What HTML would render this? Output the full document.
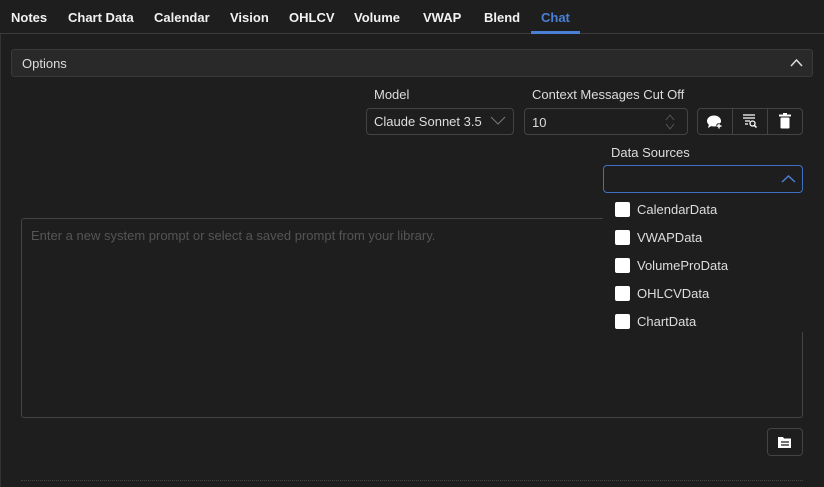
<!DOCTYPE html>
<html><head><style>
*{box-sizing:border-box;margin:0;padding:0}
body{width:824px;height:487px;background:#1e1e1e;font-family:"Liberation Sans",sans-serif;color:#ddd;position:relative;overflow:hidden;font-size:13px}
.abs{position:absolute}
.tabs{left:0;top:0;width:824px;height:34px;border-bottom:1px solid #3a3a3a;background:#1e1e1e}
.tab{position:absolute;top:10px;font-weight:bold;font-size:13px;color:#f2f2f2}
.box{border:1px solid #444;border-radius:4px}
.cb{position:absolute;left:615px;width:15px;height:15px;background:#fff;border-radius:2px}
.cl{position:absolute;left:637px;font-size:13px;color:#ddd}
</style></head><body>
<div class="abs" style="left:0;top:0;width:1px;height:487px;background:#333"></div>
<div class="abs tabs">
<span class="tab" style="left:11px">Notes</span>
<span class="tab" style="left:68px">Chart Data</span>
<span class="tab" style="left:154px">Calendar</span>
<span class="tab" style="left:230px">Vision</span>
<span class="tab" style="left:289px">OHLCV</span>
<span class="tab" style="left:354px">Volume</span>
<span class="tab" style="left:423px">VWAP</span>
<span class="tab" style="left:484px">Blend</span>
<span class="tab" style="left:541px;color:#4a7fd6">Chat</span>
<div class="abs" style="left:531px;top:31px;width:49px;height:3px;background:#4a7fd6"></div>
</div>
<div class="abs" style="left:11px;top:49px;width:802px;height:28px;background:#292929;border:1px solid #3a3a3a;border-radius:3px"></div>
<div class="abs" style="left:22px;top:56px;font-size:13px;color:#ddd">Options</div>
<svg class="abs" style="left:790px;top:58px" width="13" height="10"><path d="M1 8 L6.5 2 L12 8" stroke="#ddd" stroke-width="1.5" fill="none"/></svg>

<div class="abs" style="left:374px;top:87px">Model</div>
<div class="abs box" style="left:366px;top:108px;width:148px;height:27px"></div>
<div class="abs" style="left:374px;top:114px">Claude Sonnet 3.5</div>
<svg class="abs" style="left:490px;top:116px" width="16" height="10"><path d="M1 1 L8 8 L15 1" stroke="#777" fill="none"/></svg>

<div class="abs" style="left:532px;top:87px">Context Messages Cut Off</div>
<div class="abs box" style="left:524px;top:108px;width:164px;height:27px"></div>
<div class="abs" style="left:532px;top:115px">10</div>
<svg class="abs" style="left:664px;top:112px" width="12" height="20"><path d="M2 8 L6 3 L10 8 M2 12 L6 17 L10 12" stroke="#555" fill="none"/></svg>

<div class="abs box" style="left:697px;top:108px;width:106px;height:27px"></div>
<div class="abs" style="left:732px;top:108px;width:1px;height:27px;background:#444"></div>
<div class="abs" style="left:767px;top:108px;width:1px;height:27px;background:#444"></div>
<svg class="abs" style="left:706px;top:114px" width="18" height="16"><ellipse cx="8" cy="7" rx="7" ry="5.5" fill="#fff"/><path d="M3 10 L2 14 L7 11Z" fill="#fff"/><path d="M13 9 v6 M10 12 h6" stroke="#1e1e1e" stroke-width="3"/><path d="M13 9.5 v5 M10.5 12 h5" stroke="#fff" stroke-width="1.4"/></svg>
<svg class="abs" style="left:742px;top:113px" width="16" height="16"><path d="M1 2h12M1 5h12M3 8h5M3 11h3" stroke="#fff" stroke-width="1.3"/><circle cx="10.5" cy="10.5" r="2.5" stroke="#fff" stroke-width="1.3" fill="none"/><path d="M12.3 12.3 L14.5 14.5" stroke="#fff" stroke-width="1.5"/></svg>
<svg class="abs" style="left:779px;top:113px" width="12" height="16"><rect x="0" y="1.5" width="12" height="2" fill="#fff"/><rect x="4" y="0" width="4" height="2" fill="#fff"/><rect x="1.5" y="4.5" width="9" height="11" rx="1" fill="#fff"/></svg>

<div class="abs" style="left:611px;top:145px">Data Sources</div>
<div class="abs" style="left:603px;top:165px;width:200px;height:28px;border:1px solid #3f6fc0;border-radius:4px"></div>
<svg class="abs" style="left:781px;top:174px" width="15" height="10"><path d="M1 8 L7.5 2 L14 8" stroke="#4a7fd6" stroke-width="1.5" fill="none"/></svg>

<div class="abs" style="left:21px;top:218px;width:782px;height:200px;border:1px solid #444;border-radius:3px"></div>
<div class="abs" style="left:31px;top:228px;color:#555;font-size:13px">Enter a new system prompt or select a saved prompt from your library.</div>

<div class="abs" style="left:603px;top:196px;width:200px;height:136px;background:#1e1e1e"></div>
<div class="cb" style="top:202px"></div><div class="cl" style="top:202px">CalendarData</div>
<div class="cb" style="top:230px"></div><div class="cl" style="top:230px">VWAPData</div>
<div class="cb" style="top:258px"></div><div class="cl" style="top:258px">VolumeProData</div>
<div class="cb" style="top:286px"></div><div class="cl" style="top:286px">OHLCVData</div>
<div class="cb" style="top:314px"></div><div class="cl" style="top:314px">ChartData</div>

<div class="abs box" style="left:767px;top:428px;width:36px;height:28px"></div>
<svg class="abs" style="left:778px;top:435px" width="14" height="14"><path d="M0 2h5l1 1.5h7v9.5H0z" fill="#fff"/><path d="M3 7h8M3 10h8" stroke="#1e1e1e" stroke-width="1.3"/></svg>
<div class="abs" style="left:21px;top:480px;width:782px;border-top:1px dotted #444"></div>
</body></html>
